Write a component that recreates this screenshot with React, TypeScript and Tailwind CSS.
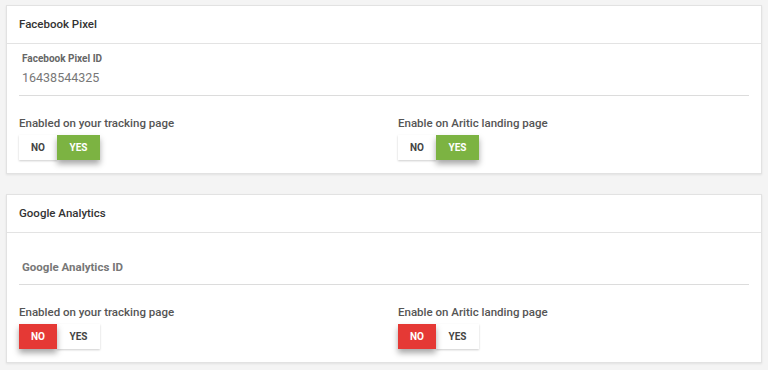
import React, { useState } from "react";

type Choice = "no" | "yes";

const Toggle = ({ value, onChange }: { value: Choice; onChange: (v: Choice) => void }) => {
  const base =
    "h-[25px] flex items-center justify-center text-[10px] font-bold cursor-pointer";
  return (
    <div className="flex mt-[5px]">
      <button
        onClick={() => onChange("no")}
        className={`${base} w-[38px] ${
          value === "no"
            ? "bg-[#e53935] text-white shadow-[0_4px_6px_rgba(0,0,0,0.35)] relative z-10"
            : "bg-white text-[#444] shadow-[0_1px_2px_rgba(0,0,0,0.2)]"
        }`}
      >
        NO
      </button>
      <button
        onClick={() => onChange("yes")}
        className={`${base} w-[43px] ${
          value === "yes"
            ? "bg-[#7cb342] text-white shadow-[0_4px_6px_rgba(0,0,0,0.35)] relative z-10"
            : "bg-white text-[#444] shadow-[0_1px_2px_rgba(0,0,0,0.2)]"
        }`}
      >
        YES
      </button>
    </div>
  );
};

const Section = ({
  title,
  label,
  value,
  initial,
}: {
  title: string;
  label: string;
  value?: string;
  initial: Choice;
}) => {
  const [tracking, setTracking] = useState<Choice>(initial);
  const [landing, setLanding] = useState<Choice>(initial);

  return (
    <div className="bg-white border border-[#e2e2e2] shadow-[0_1px_2px_rgba(0,0,0,0.08)]">
      <div className="h-[38px] flex items-center px-[12px] border-b border-[#e3e3e3] text-[11.5px] font-medium text-[#333]">
        {title}
      </div>
      <div className="px-[12px] pb-[13px]">
        {value ? (
          <div className="pt-[8px] px-[3px] h-[52px] border-b border-[#dcdcdc]">
            <div className="text-[10px] font-bold text-[#666] leading-[14px]">{label}</div>
            <div className="text-[12.5px] text-[#777] leading-[20px] mt-[2px]">{value}</div>
          </div>
        ) : (
          <div className="h-[52px] px-[3px] flex items-end pb-[9px] border-b border-[#dcdcdc]">
            <div className="text-[11.5px] font-bold text-[#777] leading-[16px]">{label}</div>
          </div>
        )}
        <div className="grid grid-cols-2 mt-[20px]">
          <div>
            <div className="text-[11.5px] font-medium text-[#555] leading-[14px]">
              Enabled on your tracking page
            </div>
            <Toggle value={tracking} onChange={setTracking} />
          </div>
          <div className="pl-[14px]">
            <div className="text-[11.5px] font-medium text-[#555] leading-[14px]">
              Enable on Aritic landing page
            </div>
            <Toggle value={landing} onChange={setLanding} />
          </div>
        </div>
      </div>
    </div>
  );
};

const App = () => {
  return (
    <div className="min-h-screen bg-[#f4f4f4] pt-[5px] px-[6px] font-['Roboto',sans-serif]">
      <div className="flex flex-col gap-[20px]">
        <Section
          title="Facebook Pixel"
          label="Facebook Pixel ID"
          value="16438544325"
          initial="yes"
        />
        <Section title="Google Analytics" label="Google Analytics ID" initial="no" />
      </div>
    </div>
  );
};

export default App;
